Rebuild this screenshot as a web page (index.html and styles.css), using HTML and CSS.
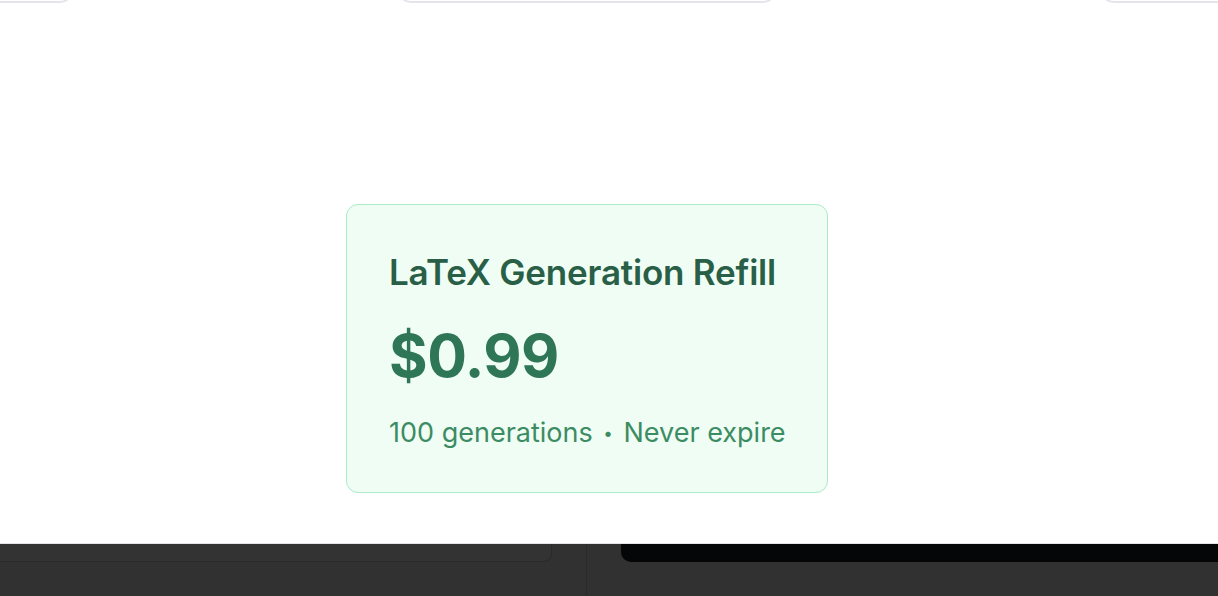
FILE: index.html
```html
<!DOCTYPE html>
<html lang="en">
<head>
<meta charset="utf-8">
<title>LaTeX Generation Refill</title>
<link rel="stylesheet" href="styles.css">
</head>
<body>
  <div class="page">
    <main class="main">
      <div class="carousel">
        <div class="peek-card"></div>
        <div class="peek-card"></div>
        <div class="peek-card"></div>
      </div>
      <div class="stage">
        <section class="refill-card">
          <h2 class="refill-title">LaTeX Generation Refill</h2>
          <div class="refill-price">$0.99</div>
          <p class="refill-desc">100 generations <span class="sep">•</span> Never expire</p>
        </section>
      </div>
    </main>
    <footer class="dock">
      <div class="dock-left">
        <div class="dock-panel"></div>
      </div>
      <div class="dock-right">
        <div class="dock-black"></div>
      </div>
    </footer>
  </div>
</body>
</html>
```

FILE: styles.css
```css
* { box-sizing: border-box; }

html, body {
  margin: 0;
  padding: 0;
  width: 1218px;
  height: 596px;
  overflow: hidden;
  background: #ffffff;
  font-family: Inter, "Noto Sans", "Liberation Sans", sans-serif;
}

.page {
  display: flex;
  flex-direction: column;
  height: 596px;
}

.main {
  height: 544px;
  flex: none;
  background: #ffffff;
  border-bottom: 1px solid #e3e4ea;
  display: flex;
  flex-direction: column;
  overflow: hidden;
}

.carousel {
  display: flex;
  gap: 323px;
  margin-left: -306px;
  margin-top: -38px;
  flex: none;
}

.peek-card {
  flex: none;
  width: 380px;
  height: 41px;
  border: 2px solid #e4e4ec;
  border-radius: 14px;
  background: #ffffff;
}

.stage {
  width: 1174px;
  display: flex;
  justify-content: center;
  padding-top: 201px;
}

.refill-card {
  width: 482px;
  background: #effdf4;
  border: 1.5px solid #abecc6;
  border-radius: 12px;
  padding: 42px 41px 43px 42px;
}

.refill-title {
  margin: 0;
  font-size: 35px;
  line-height: 50px;
  font-weight: 600;
  color: #295f47;
  letter-spacing: -0.2px;
  white-space: nowrap;
}

.refill-price {
  margin-top: 29px;
  font-size: 59px;
  line-height: 59px;
  font-weight: 700;
  color: #2f7656;
  letter-spacing: -0.5px;
}

.refill-desc {
  margin: 32px 0 0;
  font-size: 27px;
  line-height: 32px;
  font-weight: 400;
  color: #3c8c63;
  white-space: nowrap;
}

.sep {
  font-size: 17px;
  vertical-align: 3px;
  padding: 0 3px;
}

.dock {
  flex: 1;
  background: #313131;
  display: flex;
}

.dock-left {
  width: 587px;
  border-right: 1px solid #2a2a2a;
  flex: none;
}

.dock-panel {
  width: 552px;
  height: 18px;
  background: #333333;
  border-right: 1px solid #2a2a2a;
  border-bottom: 1px solid #2a2a2a;
  border-bottom-right-radius: 8px;
}

.dock-right {
  flex: 1;
  padding-left: 34px;
}

.dock-black {
  height: 18px;
  background: #050608;
  border-bottom-left-radius: 10px;
}
```
